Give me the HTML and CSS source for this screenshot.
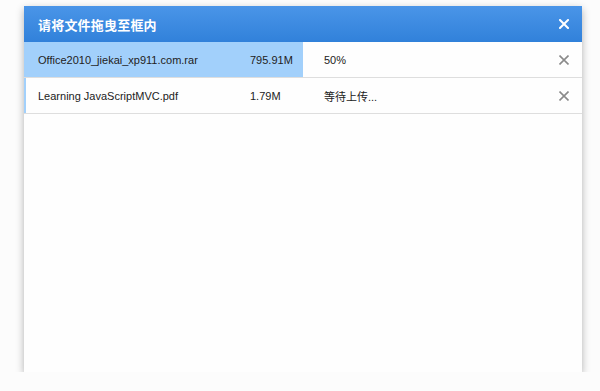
FILE: index.html
```html
<!DOCTYPE html>
<html>
<head>
<meta charset="utf-8">
<link rel="stylesheet" href="styles.css">
</head>
<body>
<div class="dialog">
  <div class="header">
    <span class="title">请将文件拖曳至框内</span>
    <span class="close">
      <svg width="10" height="10" viewBox="0 0 10 10"><path d="M1 1L9 9M9 1L1 9" stroke="#fff" stroke-width="2" stroke-linecap="square"/></svg>
    </span>
  </div>
  <div class="list">
    <div class="row">
      <div class="fill" style="width:50%"></div>
      <span class="name">Office2010_jiekai_xp911.com.rar</span>
      <span class="size">795.91M</span>
      <span class="status">50%</span>
      <span class="remove"><svg width="10" height="10" viewBox="0 0 10 10"><path d="M0.5 0.5L9.5 9.5M9.5 0.5L0.5 9.5" stroke="#8a8a8a" stroke-width="1.6"/></svg></span>
    </div>
    <div class="row">
      <div class="fill" style="width:2px"></div>
      <span class="name">Learning JavaScriptMVC.pdf</span>
      <span class="size">1.79M</span>
      <span class="status">等待上传...</span>
      <span class="remove"><svg width="10" height="10" viewBox="0 0 10 10"><path d="M0.5 0.5L9.5 9.5M9.5 0.5L0.5 9.5" stroke="#8a8a8a" stroke-width="1.6"/></svg></span>
    </div>
  </div>
</div>
</body>
</html>
```
FILE: styles.css
```css
html, body {
  margin: 0;
  padding: 0;
  background: #fcfcfc;
}
body {
  padding: 6px 0 0 24px;
  font-family: "Liberation Sans", "Noto Sans CJK SC", sans-serif;
}
.dialog {
  width: 558px;
  height: 366px;
  background: #fefefe;
  box-shadow: 0 3px 8px rgba(0,0,0,0.3);
  display: flex;
  flex-direction: column;
}
.header {
  height: 36px;
  background: linear-gradient(#4a95e8, #3181da);
  display: flex;
  align-items: center;
  justify-content: space-between;
  padding: 0 13px 0 14px;
  box-sizing: border-box;
}
.title {
  color: #fff;
  font-family: "Noto Sans CJK SC", sans-serif;
  font-weight: bold;
  font-size: 13px;
  letter-spacing: 0.2px;
}
.close {
  display: flex;
}
.row {
  position: relative;
  height: 35px;
  border-bottom: 1px solid #dedede;
  display: flex;
  align-items: center;
  font-size: 11px;
  color: #222;
}
.fill {
  position: absolute;
  left: 0;
  top: 0;
  bottom: 0;
  background: #a2d0fb;
}
.row span {
  position: relative;
}
.name {
  width: 212px;
  padding-left: 14px;
}
.size {
  width: 74px;
}
.status {
  flex: 1;
}
.remove {
  display: flex;
  padding-right: 13px;
}
```
